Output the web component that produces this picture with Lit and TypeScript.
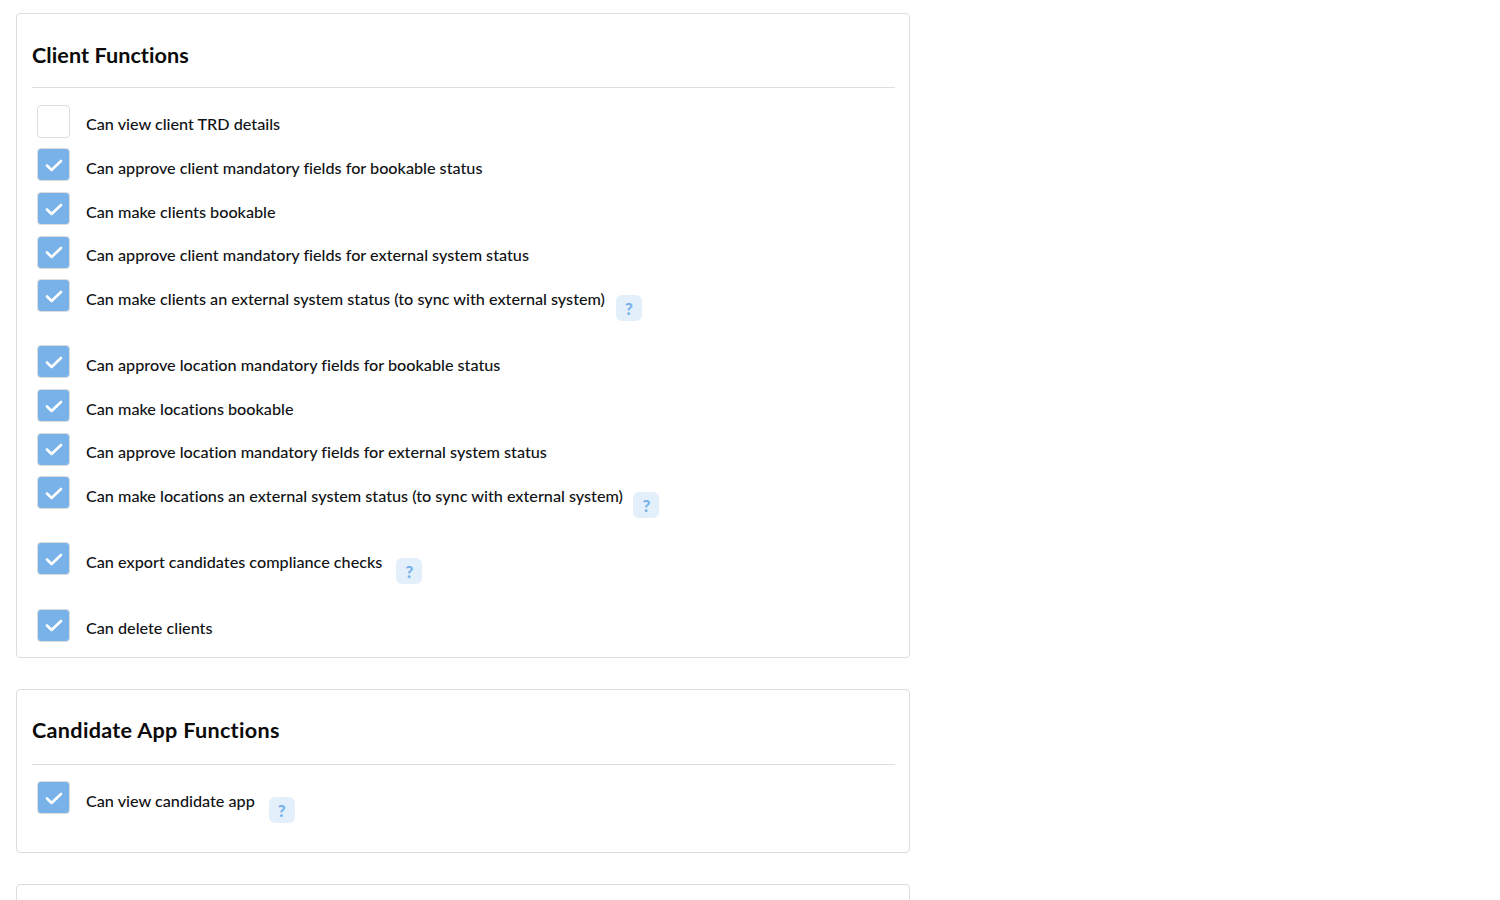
import { LitElement, html, css } from 'lit';
import { customElement } from 'lit/decorators.js';

interface Perm {
  label: string;
  checked: boolean;
  helpGap?: number;
}

const clientPerms: Perm[] = [
  { label: 'Can view client TRD details', checked: false },
  { label: 'Can approve client mandatory fields for bookable status', checked: true },
  { label: 'Can make clients bookable', checked: true },
  { label: 'Can approve client mandatory fields for external system status', checked: true },
  { label: 'Can make clients an external system status (to sync with external system)', checked: true, helpGap: 11 },
  { label: 'Can approve location mandatory fields for bookable status', checked: true },
  { label: 'Can make locations bookable', checked: true },
  { label: 'Can approve location mandatory fields for external system status', checked: true },
  { label: 'Can make locations an external system status (to sync with external system)', checked: true, helpGap: 10.5 },
  { label: 'Can export candidates compliance checks', checked: true, helpGap: 14 },
  { label: 'Can delete clients', checked: true },
];

const appPerms: Perm[] = [{ label: 'Can view candidate app', checked: true, helpGap: 14 }];

@customElement('app-root')
export class AppRoot extends LitElement {
  static styles = css`
    :host {
      display: block;
      height: 900px;
      overflow: hidden;
      background: #fff;
      font-family: Lato, 'Noto Sans', sans-serif;
      font-variant-ligatures: none;
      color: #111;
    }

    .page {
      display: flex;
      flex-direction: column;
      gap: 31px;
      width: 894px;
      padding: 13px 0 0 16px;
    }

    .card {
      box-sizing: border-box;
      border: 1px solid #ddd;
      border-radius: 4px;
      padding: 0 14px 0 15px;
    }

    .first {
      height: 645px;
    }

    .second {
      height: 164px;
    }

    h2 {
      margin: 0;
      height: 74px;
      box-sizing: border-box;
      padding-top: 24.5px;
      font-size: 21.6px;
      line-height: 32px;
      font-weight: 700;
      letter-spacing: 0.06px;
      color: #0b0b0b;
      border-bottom: 1px solid #ddd;
    }

    .second h2 {
      height: 75px;
      padding-top: 24px;
      letter-spacing: 0.3px;
    }

    .list {
      padding: 16.7px 0 0 5px;
    }

    .second .list {
      padding-top: 16.4px;
    }

    .row {
      display: flex;
      align-items: flex-start;
      height: 43.67px;
    }

    .row.tall {
      height: 66.1px;
    }

    .box {
      box-sizing: border-box;
      flex: none;
      display: flex;
      align-items: center;
      justify-content: center;
      width: 33px;
      height: 33px;
      border: 1px solid #ddd;
      border-radius: 4px;
      background: #fff;
    }

    .box.on {
      background: #78b2e8;
    }

    .label {
      margin: 7.6px 0 0 16px;
      font-size: 16.2px;
      line-height: 24px;
      font-weight: 500;
      color: #101214;
    }

    .help {
      flex: none;
      display: flex;
      align-items: center;
      justify-content: center;
      width: 26px;
      height: 26px;
      margin-top: 16px;
      border-radius: 6px;
      background: #e3f0fb;
      color: #78b2e8;
      font-size: 17px;
      font-weight: 900;
    }
  `;

  private renderRow(p: Perm) {
    return html`
      <div class="row ${p.helpGap ? 'tall' : ''}">
        <div class="box ${p.checked ? 'on' : ''}">
          ${p.checked
            ? html`<svg width="18" height="14" viewBox="0 0 18 14" fill="none" stroke="#fff" stroke-width="2.6" stroke-linecap="round" stroke-linejoin="round">
                <path d="M2 7.5l4.6 4.5 9.4-9"></path>
              </svg>`
            : ''}
        </div>
        <span class="label">${p.label}</span>
        ${p.helpGap ? html`<span class="help" style="margin-left: ${p.helpGap}px">?</span>` : ''}
      </div>
    `;
  }

  render() {
    return html`
      <div class="page">
        <section class="card first">
          <h2>Client Functions</h2>
          <div class="list">${clientPerms.map((p) => this.renderRow(p))}</div>
        </section>
        <section class="card second">
          <h2>Candidate App Functions</h2>
          <div class="list">${appPerms.map((p) => this.renderRow(p))}</div>
        </section>
        <section class="card second"></section>
      </div>
    `;
  }
}
